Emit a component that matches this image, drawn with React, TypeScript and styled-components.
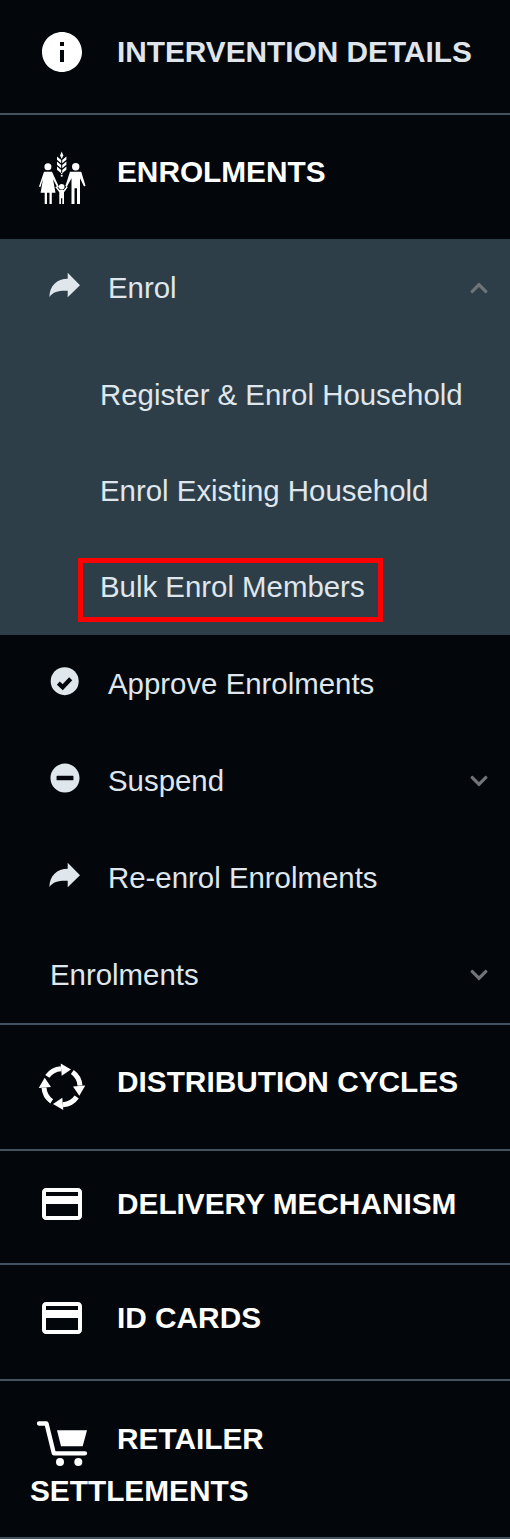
import React from 'react';
import styled, { createGlobalStyle } from 'styled-components';
import { FaMinusCircle, FaChevronUp, FaChevronDown } from 'react-icons/fa';
import { MdInfo, MdCreditCard } from 'react-icons/md';

// ─── Styled Components ───────────────────────────────────────────────────────

const GlobalStyle = createGlobalStyle`
  html, body { margin: 0; padding: 0; background: #03070c; }
  body { font-family: "Liberation Sans", Arial, sans-serif; }
`;

const Sidebar = styled.nav`
  width: 510px;
  background: #03070c;
`;

const Section = styled.div<{ $top: number; $height: number; $flush?: boolean }>`
  height: ${({ $height, $top }) => $height - $top}px;
  padding: ${({ $top }) => $top}px 30px 0 30px;
  border-bottom: ${({ $flush }) => ($flush ? 'none' : '2px solid #43525e')};
  line-height: 52px;
  font-size: 29.8px;
  font-weight: 700;
`;

const Title = styled.span<{ $muted?: boolean }>`
  color: ${({ $muted }) => ($muted ? '#dfe5ea' : '#ffffff')};
`;

const HeadIcon = styled.span`
  display: inline-block;
  width: 48px;
  height: 48px;
  margin: 0 31px 0 8px;
  vertical-align: -14px;
  color: #fff;
  line-height: 0;

  svg { width: 48px; height: 48px; overflow: visible; }
`;

const Group = styled.div`
  border-bottom: 2px solid #43525e;
`;

const Panel = styled.div`
  background: #2e3e48;
`;

const Row = styled.div`
  display: flex;
  align-items: center;
  height: 97px;
  padding: 0 21px 0 50px;
  font-size: 29.4px;
  color: #dfe6ec;
`;

const RowIcon = styled.span`
  display: flex;
  width: 30px;
  height: 30px;
  margin: -6px 28px 0 0;
  color: #dfe6ec;
  svg { width: 30px; height: 30px; overflow: visible; }
`;

const RowLabel = styled.span`
  flex: 1;
`;

const Chevron = styled.span`
  display: flex;
  color: #6f7479;
  svg { width: 20px; height: 20px; }
`;

const SubList = styled.div`
  padding-top: 11px;
`;

const SubRow = styled.div`
  display: flex;
  align-items: center;
  height: 96px;
  padding-left: 100px;
  font-size: 29.4px;
  color: #dfe6ec;
`;

const Highlight = styled.span`
  outline: 5px solid #ff0000;
  padding: 9px 13px 15px 17px;
  margin: 6px 0 0 -17px;
  line-height: 30px;
`;

// ─── Custom icons ────────────────────────────────────────────────────────────

const FamilyIcon = () => (
  <svg viewBox="0 0 48 48" fill="#fff">
    <path d="M23.700 3.500L25.300 7.500L23.700 11L22.100 7.500z" />
    {[7, 12, 17].map((y) => (
      <path
        key={y}
        d={`M23.200 ${y + 5}v3.200l-4.200-3.400v-3.200z M24.200 ${y + 5}v3.200l4.200-3.400v-3.200z`}
      />
    ))}
    <rect x="23" y="25" width="1.400" height="1" />
    <rect x="22.800" y="26.800" width="1.800" height="1.800" />
    <circle cx="9.900" cy="18.700" r="3.500" />
    <circle cx="37.700" cy="18.700" r="3.700" />
    <circle cx="23.700" cy="38.700" r="2.800" />
    <path d="M6 23.700H14L21 39L19.700 40L15 31.300L17.500 44.700H13.800V56H11.500V44.700H9V56H6.700V44.700H2.600L5 31.300L2.300 39.300L1 38.500z" />
    <path d="M32 23.700H43.200L47.500 37.700L46 38.400L42 30.300V56H39V40.300H36.500V56H33.500V30.300L28.700 39L27.400 38z" />
    <path d="M18.300 38.300L21.700 42H25.700L28.800 38.300L29.700 39.300L26 44.300V56H24.300V50.300H23V56H21.300V44.300L17.400 39.300z" />
  </svg>
);

const CycleArm = ({ angle }: { angle: number }) => (
  <g transform={`rotate(${angle})`}>
    <path d="M-14.700 -10.300A18 18 0 0 1 -1 -18" fill="none" stroke="#fff" strokeWidth="5" />
    <path d="M-1.300 -23.300L9 -17.300L-.3 -11z" fill="#fff" />
  </g>
);

const CycleIcon = () => (
  <svg viewBox="0 0 48 48">
    <g transform="translate(24 28.700)">
      {[0, 90, 180, 270].map((a) => (
        <CycleArm key={a} angle={a} />
      ))}
    </g>
  </svg>
);

const CartIcon = () => (
  <svg viewBox="0 0 48 48" fill="#fff">
    <path
      d="M1 8.500H8.500L15.800 38.300H47"
      fill="none"
      stroke="#fff"
      strokeWidth="4.300"
      strokeLinejoin="round"
      strokeLinecap="round"
    />
    <path d="M19 15.300H49L44.700 31.300H23z" />
    <circle cx="22" cy="47" r="4" />
    <circle cx="40.300" cy="47" r="4" />
  </svg>
);

const ShareIcon = () => (
  <svg viewBox="0 0 30 30" fill="currentColor">
    <path d="M17.700 2.800L30 15.200L17.700 27.200V20.800C9 20.500 3.500 21.500 -.6 27C-.6 16 7 8.800 17.700 8.800z" />
  </svg>
);

const CheckIcon = () => (
  <svg viewBox="0 0 30 30">
    <circle cx="14.700" cy="15.200" r="14" fill="currentColor" />
    <path d="M8.300 17.200L12.700 21.200L20.700 12.800" fill="none" stroke="#03070c" strokeWidth="4.300" />
  </svg>
);

// ─── Data ────────────────────────────────────────────────────────────────────

const subItems = ['Register & Enrol Household', 'Enrol Existing Household'];

// ─── Component ───────────────────────────────────────────────────────────────

export default function App() {
  return (
    <>
      <GlobalStyle />
      <Sidebar>
        <Section $top={26} $height={113}>
          <HeadIcon><MdInfo /></HeadIcon>
          <Title $muted>INTERVENTION DETAILS</Title>
        </Section>

        <Group>
          <Section $top={31} $height={124} $flush>
            <HeadIcon><FamilyIcon /></HeadIcon>
            <Title>ENROLMENTS</Title>
          </Section>

          <Panel>
            <Row>
              <RowIcon><ShareIcon /></RowIcon>
              <RowLabel>Enrol</RowLabel>
              <Chevron><FaChevronUp /></Chevron>
            </Row>
            <SubList>
              {subItems.map((label) => (
                <SubRow key={label}>{label}</SubRow>
              ))}
              <SubRow><Highlight>Bulk Enrol Members</Highlight></SubRow>
            </SubList>
          </Panel>

          <Row>
            <RowIcon><CheckIcon /></RowIcon>
            <RowLabel>Approve Enrolments</RowLabel>
          </Row>
          <Row>
            <RowIcon><FaMinusCircle /></RowIcon>
            <RowLabel>Suspend</RowLabel>
            <Chevron><FaChevronDown /></Chevron>
          </Row>
          <Row>
            <RowIcon><ShareIcon /></RowIcon>
            <RowLabel>Re-enrol Enrolments</RowLabel>
          </Row>
          <Row>
            <RowLabel>Enrolments</RowLabel>
            <Chevron><FaChevronDown /></Chevron>
          </Row>
        </Group>

        <Section $top={31} $height={124}>
          <HeadIcon><CycleIcon /></HeadIcon>
          <Title>DISTRIBUTION CYCLES</Title>
        </Section>
        <Section $top={27} $height={112}>
          <HeadIcon><MdCreditCard /></HeadIcon>
          <Title>DELIVERY MECHANISM</Title>
        </Section>
        <Section $top={27} $height={114}>
          <HeadIcon><MdCreditCard /></HeadIcon>
          <Title>ID CARDS</Title>
        </Section>
        <Section $top={32} $height={156}>
          <HeadIcon><CartIcon /></HeadIcon>
          <Title>RETAILER SETTLEMENTS</Title>
        </Section>
      </Sidebar>
    </>
  );
}
